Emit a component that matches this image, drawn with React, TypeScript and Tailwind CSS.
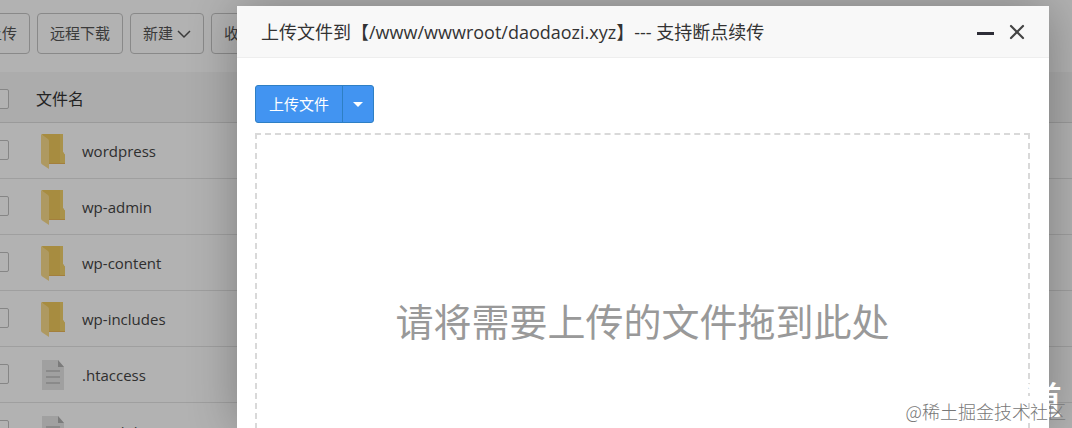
import { X } from 'lucide-react';

const files = [
  { name: 'wordpress', type: 'folder' },
  { name: 'wp-admin', type: 'folder' },
  { name: 'wp-content', type: 'folder' },
  { name: 'wp-includes', type: 'folder' },
  { name: '.htaccess', type: 'file' },
  { name: '.user.ini', type: 'file' },
];

const toolButton =
  'flex h-[41px] shrink-0 items-center gap-1 rounded-sm border border-[#c4c4c4] px-3 text-[15px] text-[#555]';
const checkbox = 'block size-5 appearance-none rounded-xs border border-[#c0c0c0] bg-white';

function FolderIcon() {
  return (
    <svg className="h-9 w-7" viewBox="0 0 28 36" aria-hidden="true">
      <path d="M2 1h21v18l2 3v9H9z" fill="#efc95c" />
      <path d="M20 1h3v18l2 3v9h-5z" fill="#f3d26c" />
      <path d="M1 1l7 5c1 1 1 2 1 3v27l-6-4c-1-1-2-1-2-3z" fill="#fadb8c" />
      <path d="M9 30.500h16" stroke="#eab658" strokeWidth="1" />
    </svg>
  );
}

function FileIcon() {
  return (
    <svg className="h-9 w-7" viewBox="0 0 28 36" aria-hidden="true">
      <path d="M2 3h16l6 7v23H2z" fill="#e6e6e6" />
      <path d="M18 3l6 7h-6z" fill="#b0b0b0" />
      <path d="M6 14h14M6 20h14M6 26h14" stroke="#bcbcbc" strokeWidth="1.5" />
    </svg>
  );
}

function FileManager() {
  return (
    <main>
      <div className="flex gap-[7px] overflow-hidden pt-[13px] pb-[18px]">
        <button className={`${toolButton} -ml-[26px]`}>上传</button>
        <button className={toolButton}>远程下载</button>
        <button className={toolButton}>
          新建
          <svg className="h-4 w-[14px]" viewBox="0 0 14 16" fill="none" aria-hidden="true">
            <path d="M1 5l6 6 6-6" stroke="currentColor" strokeWidth="1.5" />
          </svg>
        </button>
        <button className={toolButton}>收藏夹</button>
      </div>
      <table className="w-full table-fixed text-left text-[#444]">
        <thead>
          <tr className="h-[50px] border-b border-[#ddd] bg-[#f6f6f6]">
            <th className="w-9 pt-1 font-normal">
              <input type="checkbox" aria-label="全选" className={`${checkbox} -ml-[11px]`} />
            </th>
            <th className="pt-1 text-base font-normal text-[#333]">文件名</th>
          </tr>
        </thead>
        <tbody>
          {files.map((file) => (
            <tr key={file.name} className="h-14 border-b border-[#e4e4e4]">
              <td>
                <input type="checkbox" aria-label={file.name} className={`${checkbox} -ml-[11px]`} />
              </td>
              <td className="pt-[2px]">
                <div className="flex items-center gap-[14px] pl-1 text-[15px]">
                  {file.type === 'folder' ? <FolderIcon /> : <FileIcon />}
                  <span>{file.name}</span>
                </div>
              </td>
            </tr>
          ))}
        </tbody>
      </table>
    </main>
  );
}

function UploadDialog() {
  return (
    <div className="absolute inset-0 flex bg-black/30 pt-[6px] pr-[23px] pl-[237px]">
      <section
        role="dialog"
        aria-labelledby="upload-title"
        className="z-10 flex min-w-0 flex-1 flex-col rounded-t-xs bg-white shadow-[1px_1px_50px_rgba(0,0,0,0.3)]"
      >
        <header className="flex h-13 shrink-0 items-center justify-between border-b border-[#eee] bg-[#f8f8f8] pr-5 pl-6">
          <h1 id="upload-title" className="truncate text-lg text-[#333]">
            上传文件到【/www/wwwroot/daodaozi.xyz】--- 支持断点续传
          </h1>
          <div className="flex items-center gap-[11px] text-[#2d2d37]">
            <button aria-label="最小化" className="flex h-5 items-center">
              <span className="mt-1 block h-[3px] w-[17px] bg-[#2d2d37]" />
            </button>
            <button aria-label="关闭">
              <X className="size-6 text-[#444]" strokeWidth={2.2} />
            </button>
          </div>
        </header>
        <div className="flex-1 pt-[27px] pr-[19px] pl-[18px]">
          <div className="flex h-[38px] w-fit rounded-[3px] border border-[#2e7fc4] bg-[#4294f1] text-white">
            <button className="border-r border-[#2e7fc4] px-[13px] text-[15px]">上传文件</button>
            <button aria-label="更多上传方式" className="flex w-[30px] items-center justify-center">
              <svg className="h-[5px] w-[10px]" viewBox="0 0 10 5" aria-hidden="true">
                <path d="M0 0h10L5 5z" fill="currentColor" />
              </svg>
            </button>
          </div>
          <div className="mt-[10px] flex h-[376px] items-center justify-center border-2 border-dashed border-[#d9d9d9]">
            <p className="text-[38px] leading-none text-[#999]">请将需要上传的文件拖到此处</p>
          </div>
        </div>
      </section>
    </div>
  );
}

export default function App() {
  return (
    <div className="relative h-screen overflow-hidden bg-white font-['Open_Sans','Noto_Sans_CJK_SC',sans-serif]">
      <FileManager />
      <UploadDialog />
      <span className="absolute right-[10px] bottom-[10px] z-10 text-[38px] leading-none font-medium text-white">
        道
      </span>
      <span className="absolute right-[6px] bottom-[5px] z-20 font-['Noto_Sans_CJK_SC',sans-serif] text-lg leading-6 font-light text-[#777]">
        @稀土掘金技术社区
      </span>
    </div>
  );
}
